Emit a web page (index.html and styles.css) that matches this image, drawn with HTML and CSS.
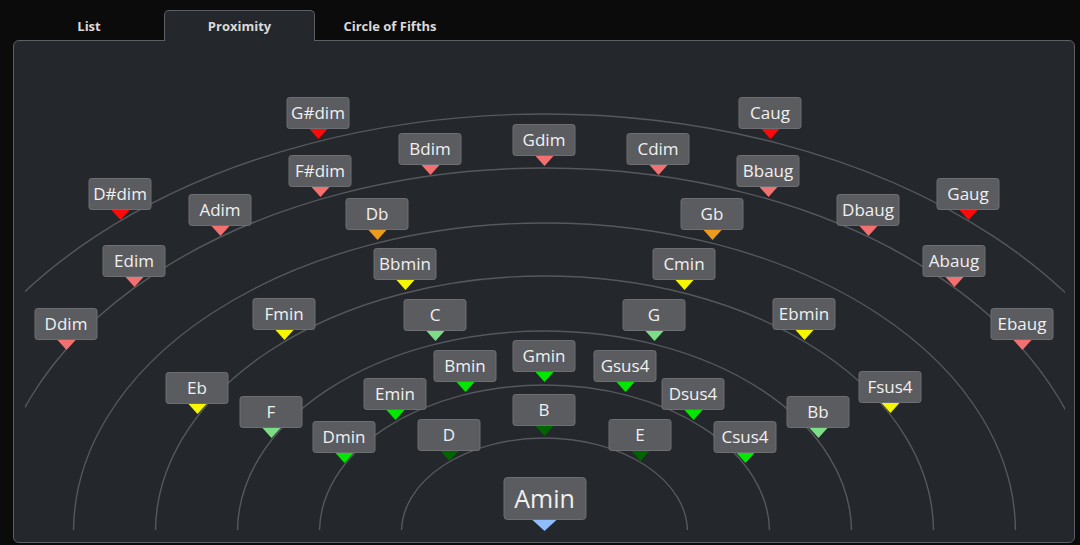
FILE: index.html
```html
<!DOCTYPE html>
<html lang="en">
<head>
    <meta charset="UTF-8">
    <meta name="viewport" content="width=device-width, initial-scale=1">
    <title>Chord Assistant - Proximity</title>
    <link rel="stylesheet" href="styles.css">
</head>
<body>
<nav class="tabs">
    <div class="tab">List</div>
    <div class="tab active">Proximity</div>
    <div class="tab">Circle of Fifths</div>
</nav>
<main class="panel" id="panel">
    <svg class="arcs" width="1060" height="501" viewBox="14 41 1060 501">
        <defs>
            <clipPath id="clip">
                <rect x="25" y="41" width="1040" height="489"></rect>
            </clipPath>
        </defs>
        <g clip-path="url(#clip)" id="rings"></g>
    </svg>
</main>
<script>
    const $ = function (selector) {
        return document.querySelector(selector);
    };

    // ring centre, in page coordinates
    const CX = 544.5, CY = 532;
    const tops = [438, 385, 331, 276, 223, 168, 114];

    tops.forEach((top, k) => {
        const e = document.createElementNS('http://www.w3.org/2000/svg', 'ellipse');
        e.setAttribute('cx', CX);
        e.setAttribute('cy', CY);
        e.setAttribute('rx', 143 + 82 * k);
        e.setAttribute('ry', CY - top);
        $('#rings').appendChild(e);
    });

    // name, x of triangle tip, y of triangle tip, colour
    const chords = [
        ['G#dim', 318, 139, 'red'],
        ['Caug', 770, 139, 'red'],
        ['D#dim', 120, 220, 'red'],
        ['Gaug', 968, 220, 'red'],
        ['Bdim', 430, 175, 'salmon'],
        ['Gdim', 544, 166, 'salmon'],
        ['Cdim', 658, 175, 'salmon'],
        ['F#dim', 320, 197, 'salmon'],
        ['Bbaug', 768, 197, 'salmon'],
        ['Adim', 220, 236, 'salmon'],
        ['Dbaug', 868, 236, 'salmon'],
        ['Edim', 134, 287, 'salmon'],
        ['Abaug', 954, 287, 'salmon'],
        ['Ddim', 66, 350, 'salmon'],
        ['Ebaug', 1022, 350, 'salmon'],
        ['Db', 377, 240, 'orange'],
        ['Gb', 712, 240, 'orange'],
        ['Bbmin', 405, 290, 'yellow'],
        ['Cmin', 684, 290, 'yellow'],
        ['Fmin', 284, 340, 'yellow'],
        ['Ebmin', 804, 340, 'yellow'],
        ['C', 435, 341, 'pale'],
        ['G', 654, 341, 'pale'],
        ['Eb', 197, 414, 'yellow'],
        ['Fsus4', 890, 413, 'yellow'],
        ['F', 271, 438, 'pale'],
        ['Bb', 818, 438, 'pale'],
        ['Bmin', 465, 392, 'green'],
        ['Gmin', 544, 382, 'green'],
        ['Gsus4', 625, 392, 'green'],
        ['Emin', 395, 420, 'green'],
        ['Dsus4', 693, 420, 'green'],
        ['Dmin', 344, 463, 'green'],
        ['Csus4', 745, 463, 'green'],
        ['D', 449, 461, 'dark'],
        ['B', 544, 436, 'dark'],
        ['E', 640, 461, 'dark'],
        ['Amin', 544.5, 531, 'blue', 'main']
    ];

    chords.forEach(c => {
        const chord = document.createElement('div');
        chord.className = 'chord ' + c[3] + (c[4] ? ' ' + c[4] : '');
        chord.style.left = (c[1] - 14) + 'px';
        chord.style.top = (c[2] - 41) + 'px';
        chord.innerHTML = '<span class="box">' + c[0] + '</span><span class="tip"></span>';
        $('#panel').appendChild(chord);
    });
</script>
</body>
</html>
```

FILE: styles.css
```css
* {
    margin: 0;
    padding: 0;
    box-sizing: border-box;
}

html, body {
    height: 100%;
}

body {
    background-color: #0b0b0b;
    font-family: "Open Sans", "Noto Sans", sans-serif;
    overflow: hidden;
}

.tabs {
    display: flex;
    height: 40px;
    padding: 10px 0 0 14px;
}

.tab {
    width: 150px;
    height: 31px;
    margin-bottom: -1px;
    padding-top: 7px;
    text-align: center;
    font-size: 13px;
    font-weight: 700;
    color: #dadada;
    position: relative;
    z-index: 1;
}

.tab.active {
    background-color: #24272b;
    border: 1px solid #5c5f63;
    border-bottom: none;
    border-radius: 5px 5px 0 0;
    width: 151px;
    padding-top: 6px;
}

.panel {
    position: relative;
    margin-left: 13px;
    width: 1062px;
    height: 503px;
    background-color: #24272b;
    border: 1px solid #5c5f63;
    border-radius: 6px;
}

.arcs {
    position: absolute;
    left: 0;
    top: 0;
}

.arcs ellipse {
    fill: none;
    stroke: #55585d;
    stroke-width: 1.4;
}

.chord {
    position: absolute;
    display: flex;
    flex-direction: column;
    align-items: center;
    transform: translate(-50%, -100%);
}

.chord .box {
    display: flex;
    align-items: center;
    justify-content: center;
    width: 63px;
    height: 32px;
    background-color: #5b5c60;
    border: 1px solid #6d6e72;
    border-radius: 3px;
    color: #f0f0f0;
    font-size: 17px;
    line-height: 1;
    padding-bottom: 1px;
}

.chord .tip {
    width: 0;
    height: 0;
    border-left: 9px solid transparent;
    border-right: 9px solid transparent;
    border-top: 10px solid currentColor;
}

.chord.main .box {
    width: 83px;
    height: 43px;
    font-size: 25px;
    border-radius: 4px;
}

.chord.main .tip {
    border-left-width: 12px;
    border-right-width: 12px;
    border-top-width: 11px;
}

.red { color: #ff0a0a; }
.salmon { color: #f37070; }
.orange { color: #eb9c1e; }
.yellow { color: #f6f600; }
.pale { color: #7ddd86; }
.green { color: #00e800; }
.dark { color: #006400; }
.blue { color: #8fbdff; }
```
